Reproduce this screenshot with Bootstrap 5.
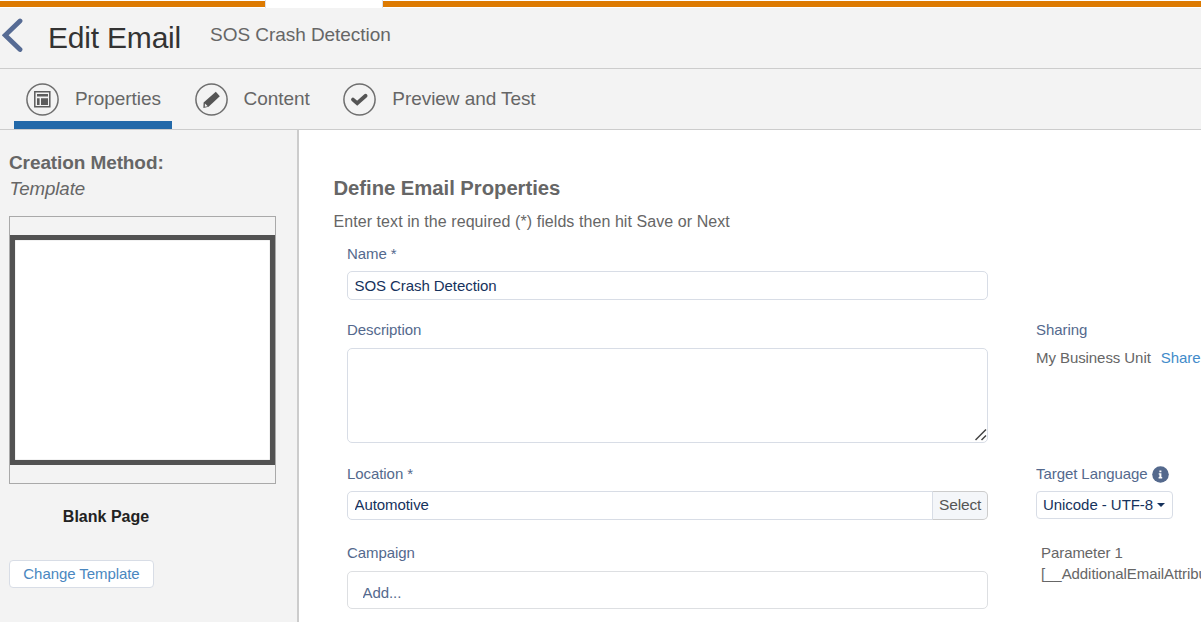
<!DOCTYPE html>
<html lang="en">
<head>
<meta charset="utf-8">
<title>Edit Email</title>
<meta name="viewport" content="width=device-width, initial-scale=1">
<link href="https://cdn.jsdelivr.net/npm/bootstrap@5.3.0/dist/css/bootstrap.min.css" rel="stylesheet">
<style>
body{font-family:"Liberation Sans",Arial,sans-serif;font-size:15px;line-height:20px;letter-spacing:-.07px;color:#666;background:#fff;height:622px;overflow:hidden}
.topbar{height:8px;padding:1px 0}
.topbar .bar{background:#dd7a01;height:6px}
.topbar .bar-start{width:265px}
.topbar .gap-tab{width:118px;height:8px;margin-top:-1px;border:solid #dcdfe6;border-width:0 1px}
.page-head{height:61px;background:#f3f3f3;border-bottom:1px solid #ccc;padding-left:2px}
.page-head h1{font-size:30px;letter-spacing:-.2px;line-height:36px;color:#333;margin:12px 0 0 25px}
.page-head .sub{font-size:19px;letter-spacing:-.05px;line-height:24px;margin:15px 0 0 29px}
.page-head svg{margin-top:10px}
.steps{height:61px;background:#f3f3f3;border-bottom:1px solid #ccc;padding-left:14px;gap:10.7px}
.steps .step{height:60px;font-size:19px;line-height:24px;color:#666;padding:0 11px 0 12px;text-decoration:none;border-bottom:8px solid transparent}
.steps .step.active{border-color:#2369a9}
.steps .step svg{margin:14px 16px 0 0}
.steps .step span{margin-top:18px}
.side{width:299px;height:492px;background:#f3f3f3;border-right:2px solid #ccc;padding:21px 0 0 9px}
.side h2{font-size:19px;letter-spacing:-.1px;line-height:24px;margin:0}
.side .method{font-size:18.7px;line-height:24px;padding:2px 0 0 .5px}
.thumb{width:267px;height:268px;border:1px solid #a9a9a9;margin-top:15px;padding:18px 0}
.thumb .page{height:230px;background:#fff;border:5px solid #525252;box-shadow:inset 0 0 1px #777}
.side .caption{width:194px;font-size:16px;letter-spacing:0;line-height:20px;color:#222;margin-top:23px}
.btn-plain{font-size:15px;letter-spacing:-.07px;line-height:20px;color:#4a87bf;background:#fff;border:1px solid #d8dde6;border-radius:4px;width:145px;height:28px;padding:3px 12px;margin-top:33px}
.main{padding:46px 0 0 34.5px;width:902px}
.main h2{font-size:20.3px;letter-spacing:-.04px;line-height:24px;margin:0}
.main .hint{font-size:16px;letter-spacing:.07px;line-height:20px;margin-top:12px}
.fields{margin:12px 0 0 13.5px}
.col-left{width:641px}
.col-right{width:165px;overflow:hidden;margin-left:48px;padding-top:76px;white-space:nowrap}
.lbl{display:block;color:#54698d;line-height:20px;height:20px}
.fields .form-control{font-size:15px;letter-spacing:-.07px;line-height:20px;color:#16325c;border:1px solid #d8dde6;border-radius:5px;padding:3px 6.5px;height:29px;min-height:0}
.fields textarea.form-control{height:95px;resize:none;display:block}
.grip{position:absolute;right:1px;bottom:2px}
#loc{padding-top:2px;padding-bottom:4px}
.btn-select{font-size:15.5px;letter-spacing:-.15px;color:#555;background:#f4f6f9;border:1px solid #ccc;border-left-color:#d8dde6;border-radius:0 5px 5px 0;padding:3px 6px 4px;width:56px;line-height:20px}
.fields .campaign{height:38px;padding:11px 14.5px 6px;line-height:19px;margin-top:8px;border-color:#dddfe2}
.fields .campaign::placeholder{color:#54698d;opacity:1}
.share{color:#428bca;text-decoration:none;margin-left:10px}
.btn-lang{font-size:15px;letter-spacing:-.05px;line-height:20px;color:#16325c;background:#fff;border:1px solid #d8dde6;border-radius:4px;width:137px;height:28px;padding:3px 6px}
.btn-lang::after{border-top-width:4px;border-left-width:4px;border-right-width:4px;margin-left:4px;vertical-align:3px}
.params{padding:23px 0 0 5px;line-height:21px}
</style>
</head>
<body>
<div class="topbar d-flex"><div class="bar bar-start"></div><div class="gap-tab"></div><div class="bar flex-grow-1"></div></div>
<header class="page-head d-flex align-items-start">
  <svg width="21" height="35" viewBox="0 0 21 35" fill="none" stroke="#566b94" stroke-width="4.8" stroke-linecap="round"><path d="M18 3 3.2 17.2 18 31.5"/></svg>
  <h1 class="fw-normal">Edit Email</h1>
  <div class="sub">SOS Crash Detection</div>
</header>
<nav class="steps d-flex">
  <a class="step active d-flex" href="#">
    <svg width="33" height="33" viewBox="0 0 33 33" fill="none" stroke="#5c5c5c"><circle cx="16.5" cy="16.5" r="15.6" stroke-width="1.5" stroke="#6e6e6e"/><path d="M8.8 8.8h15v15h-15z" stroke-width="1.5"/><path d="M11 11h11v2.6H11zM11 15.3h2.6V22H11zM15 15.3h7V22h-7z" fill="#5c5c5c" stroke="none"/></svg>
    <span>Properties</span></a>
  <a class="step d-flex" href="#">
    <svg width="33" height="33" viewBox="0 0 33 33"><circle cx="16.5" cy="16.5" r="15.6" fill="none" stroke-width="1.5" stroke="#6e6e6e"/><path d="M20.8 8.7 24.8 13.2 13.6 23.8 8.4 25 8.6 19.6z" fill="#555"/><path d="M9.9 20.6 12.8 23.2 9.8 23.8z" fill="#f3f3f3"/></svg>
    <span>Content</span></a>
  <a class="step d-flex" href="#">
    <svg width="33" height="33" viewBox="0 0 33 33" fill="none"><circle cx="16.5" cy="16.5" r="15.6" stroke-width="1.5" stroke="#6e6e6e"/><path d="M10 16.6 14.2 20.2 22.6 12.8" stroke="#555" stroke-width="3.8" stroke-linecap="round"/></svg>
    <span>Preview and Test</span></a>
</nav>
<div class="d-flex">
  <aside class="side flex-shrink-0">
    <h2 class="fw-bold">Creation Method:</h2>
    <div class="method fst-italic">Template</div>
    <div class="thumb"><div class="page"></div></div>
    <div class="caption fw-bold text-center">Blank Page</div>
    <button class="btn btn-plain" type="button">Change Template</button>
  </aside>
  <main class="main">
    <h2 class="fw-bold">Define Email Properties</h2>
    <div class="hint">Enter text in the required (*) fields then hit Save or Next</div>
    <div class="fields d-flex">
      <div class="col-left flex-shrink-0">
        <label class="lbl" for="name">Name *</label>
        <input id="name" class="form-control" style="margin-top:7px" value="SOS Crash Detection">
        <label class="lbl" for="desc" style="margin-top:20px">Description</label>
        <div class="position-relative mt-2"><textarea id="desc" class="form-control"></textarea>
          <svg class="grip" width="12" height="12" viewBox="0 0 12 12" stroke="#444" stroke-width="1.5"><path d="M.5 11 11 .5M6.5 11 11 6.5"/></svg></div>
        <label class="lbl" for="loc" style="margin-top:21px">Location *</label>
        <div class="input-group" style="margin-top:7px"><input id="loc" class="form-control" value="Automotive"><button class="btn btn-select" type="button">Select</button></div>
        <label class="lbl" for="camp" style="margin-top:23px">Campaign</label>
        <input id="camp" class="form-control campaign" placeholder="Add...">
      </div>
      <div class="col-right flex-shrink-0">
        <span class="lbl">Sharing</span>
        <div class="mt-2">My Business Unit<a class="share" href="#">Share</a></div>
        <div class="lbl d-flex" style="margin-top:96px">Target Language
          <svg width="17" height="17" viewBox="0 0 17 17" style="margin:2px 0 0 4px"><circle cx="8.5" cy="8.5" r="8.3" fill="#54698d"/><path d="M7.4 4.4h2v1.8h-2zM6.7 7.2h2.7v3.9h.8v1.3H6.6v-1.3h.8V8.4h-.7z" fill="#fff"/></svg></div>
        <button class="btn btn-lang dropdown-toggle text-start" style="margin-top:7px" type="button">Unicode - UTF-8</button>
        <div class="params">Parameter 1<br>[__AdditionalEmailAttribu</div>
      </div>
    </div>
  </main>
</div>
<script src="https://cdn.jsdelivr.net/npm/bootstrap@5.3.0/dist/js/bootstrap.bundle.min.js"></script>
</body>
</html>
